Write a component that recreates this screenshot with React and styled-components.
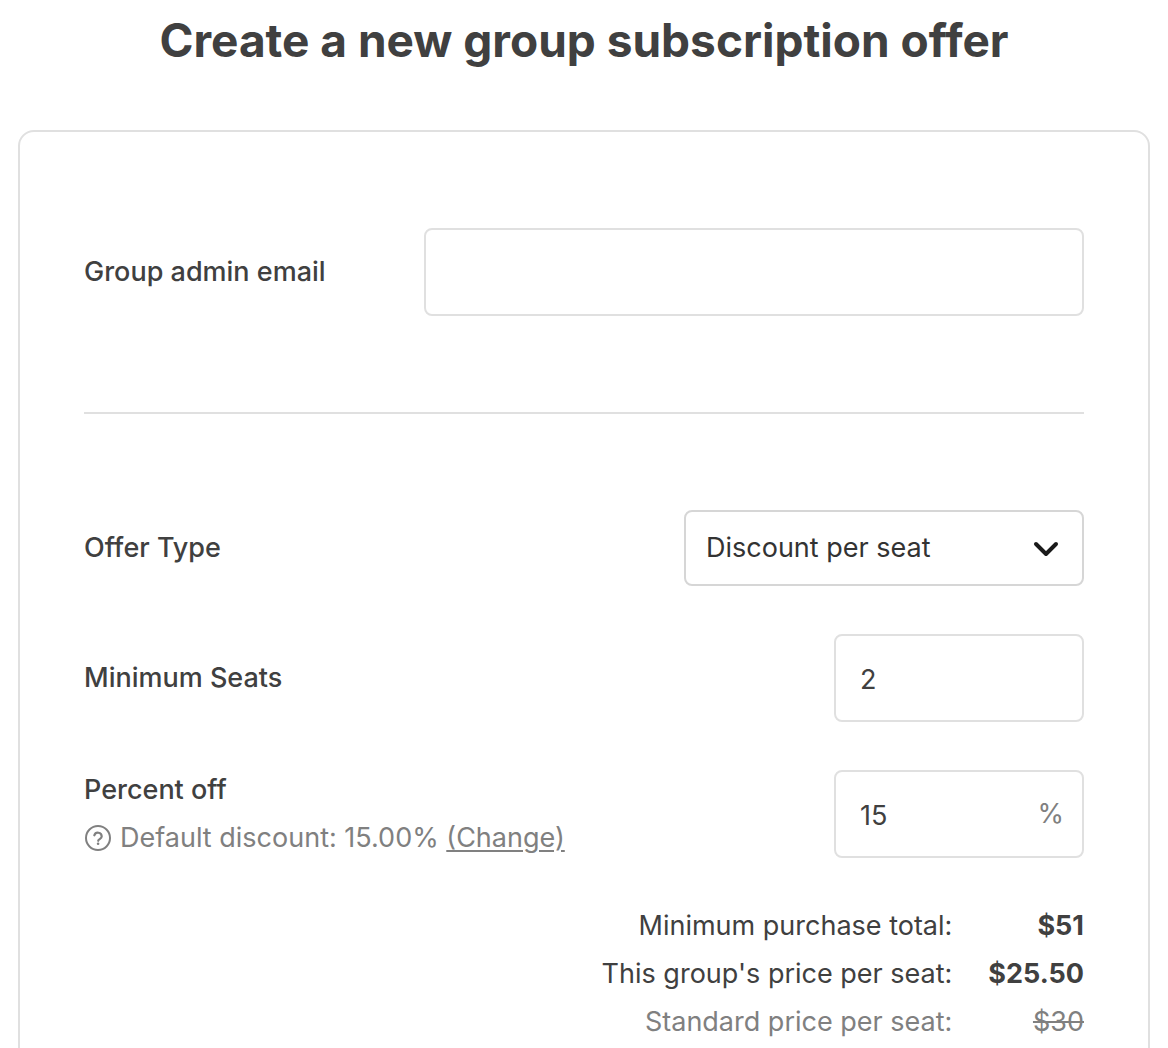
import { useState } from 'react';
import styled, { createGlobalStyle } from 'styled-components';

const GlobalStyle = createGlobalStyle`
  * {
    box-sizing: border-box;
  }
  html {
    scrollbar-width: none;
  }
  body {
    margin: 0;
    background: #fff;
    color: #404040;
    font-family: Inter, sans-serif;
    font-size: 27px;
    line-height: 48px;
  }
`;

const Page = styled.main`
  padding: 8px 18px 64px;
`;

const Title = styled.h1`
  margin: 0 0 58px;
  font-size: 46px;
  line-height: 64px;
  font-weight: 700;
  text-align: center;
`;

const Card = styled.form`
  padding: 96px 64px;
  border: 2px solid #e0e0e0;
  border-radius: 16px;
`;

const Row = styled.div`
  display: flex;
  align-items: center;
  justify-content: space-between;
  gap: 24px;
`;

const Divider = styled.hr`
  margin: 96px 0;
  border: 0;
  border-top: 2px solid #e0e0e0;
`;

const Fields = styled.div`
  display: flex;
  flex-direction: column;
  gap: 48px;
`;

const Label = styled.label`
  display: block;
  line-height: 40px;
  font-weight: 500;
`;

const LabelGroup = styled.div`
  display: flex;
  flex-direction: column;
  gap: 8px;
`;

const Box = styled.div`
  display: flex;
  align-items: center;
  flex: 0 1 ${({ $width }) => $width};
  height: 88px;
  border: 2px solid #e0e0e0;
  border-radius: 8px;
`;

const SelectBox = styled(Box)`
  position: relative;
  height: 76px;
  border-color: #d6d6d6;
  color: #333;
`;

const Input = styled.input`
  width: 100%;
  min-width: 0;
  height: 100%;
  padding: 2px 24px 0;
  border: 0;
  outline: 0;
  background: transparent;
  color: inherit;
  font: inherit;
`;

const Select = styled.select`
  width: 100%;
  height: 100%;
  padding: 0 64px 0 20px;
  border: 0;
  outline: 0;
  appearance: none;
  background: transparent;
  color: inherit;
  font: inherit;
`;

const Chevron = styled.svg`
  position: absolute;
  right: 22px;
  pointer-events: none;
`;

const Suffix = styled.span`
  padding-right: 18px;
  color: #808080;
`;

const Hint = styled.div`
  display: flex;
  align-items: center;
  gap: 8px;
  line-height: 40px;
  color: #808080;
`;

const HintLink = styled.a`
  color: inherit;
  text-decoration-thickness: 2px;
  text-underline-offset: 3px;
`;

const Summary = styled.table`
  margin: 44px 0 0 auto;
  border-collapse: collapse;
  text-align: right;

  th {
    padding: 0 36px 0 0;
    font-weight: 400;
  }
  td {
    padding: 0;
    font-weight: 700;
  }
`;

const StandardPrice = styled.tr`
  color: #808080;

  && td {
    font-weight: 400;
  }
`;

const HelpIcon = () => (
  <svg width='28' height='28' viewBox='0 0 28 28' fill='none' stroke='currentColor' strokeWidth='2' aria-hidden='true'>
    <circle cx='14' cy='14' r='12' />
    <path d='M10.3 11.3a3.8 3.8 0 0 1 7.4 1.2c0 2.3-3.5 2.7-3.5 4.3' strokeWidth='2.2' strokeLinecap='round' />
    <circle cx='14.1' cy='19.8' r='1.3' fill='currentColor' stroke='none' />
  </svg>
);

const App = () => {
  const [email, setEmail] = useState('');
  const [seats, setSeats] = useState('2');
  const [percent, setPercent] = useState('15');

  return (
    <Page>
      <GlobalStyle />
      <Title>Create a new group subscription offer</Title>
      <Card>
        <Row>
          <Label htmlFor='email'>Group admin email</Label>
          <Box $width='660px'>
            <Input id='email' type='email' value={email} onChange={(e) => setEmail(e.target.value)} />
          </Box>
        </Row>
        <Divider />
        <Fields>
          <Row>
            <Label htmlFor='offer-type'>Offer Type</Label>
            <SelectBox $width='400px'>
              <Select id='offer-type'>
                <option>Discount per seat</option>
              </Select>
              <Chevron width='28' height='28' viewBox='0 0 28 28' fill='none' stroke='#1a1a1a' strokeWidth='4' strokeLinecap='round' strokeLinejoin='round' aria-hidden='true'>
                <path d='M4 10l10 10 10-10' />
              </Chevron>
            </SelectBox>
          </Row>
          <Row>
            <Label htmlFor='seats'>Minimum Seats</Label>
            <Box $width='250px'>
              <Input id='seats' inputMode='numeric' value={seats} onChange={(e) => setSeats(e.target.value)} />
            </Box>
          </Row>
          <Row>
            <LabelGroup>
              <Label htmlFor='percent'>Percent off</Label>
              <Hint>
                <HelpIcon />
                <span>Default discount: 15.00% <HintLink href='#discount'>(Change)</HintLink></span>
              </Hint>
            </LabelGroup>
            <Box $width='250px'>
              <Input id='percent' inputMode='decimal' value={percent} onChange={(e) => setPercent(e.target.value)} />
              <Suffix>%</Suffix>
            </Box>
          </Row>
        </Fields>
        <Summary>
          <tbody>
            <tr>
              <th scope='row'>Minimum purchase total:</th>
              <td>$51</td>
            </tr>
            <tr>
              <th scope='row'>This group's price per seat:</th>
              <td>$25.50</td>
            </tr>
            <StandardPrice>
              <th scope='row'>Standard price per seat:</th>
              <td><s>$30</s></td>
            </StandardPrice>
          </tbody>
        </Summary>
      </Card>
    </Page>
  );
};

export default App;
